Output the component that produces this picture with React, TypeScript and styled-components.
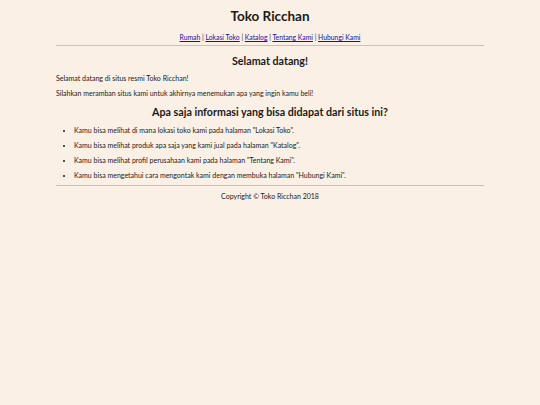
import styled, { createGlobalStyle } from "styled-components"

const GlobalStyle = createGlobalStyle`
  html, body {
    margin: 0;
    padding: 0;
    background-color: #faf0e6;
  }
  body {
    font-family: "Lato", "DejaVu Sans", sans-serif;
    color: #1a1a1a;
  }
`

const Page = styled.div`
  width: 428px;
  margin: 0 auto;
  padding-top: 7px;
`

const Title = styled.h1`
  margin: 0;
  font-size: 13.5px;
  font-weight: bold;
  text-align: center;
  line-height: 18px;
`

const Nav = styled.nav`
  margin-top: 8px;
  font-size: 6.8px;
  line-height: 8px;
  text-align: center;
  color: #333;

  a {
    color: #1a0dab;
    text-decoration: underline;
  }
`

const Rule = styled.hr<{ $top: number }>`
  border: none;
  border-top: 1px solid #c9c0bd;
  margin: ${({ $top }) => $top}px 0 0;
`

const Heading = styled.h2`
  margin: 8px 0 0;
  font-size: 10.7px;
  font-weight: bold;
  line-height: 13px;
  text-align: center;
`

const Para = styled.p`
  margin: 7px 0 0;
  font-size: 7px;
  line-height: 8px;
`

const List = styled.ul`
  margin: 0;
  padding-left: 18px;
`

const Item = styled.li<{ $top: number }>`
  margin-top: ${({ $top }) => $top}px;
  font-size: 7px;
  line-height: 8px;
`

const Footer = styled.footer`
  margin-top: 6px;
  font-size: 7px;
  line-height: 8px;
  text-align: center;
`

const links = ["Rumah", "Lokasi Toko", "Katalog", "Tentang Kami", "Hubungi Kami"]

const items = [
  "Kamu bisa melihat di mana lokasi toko kami pada halaman \"Lokasi Toko\".",
  "Kamu bisa melihat produk apa saja yang kami jual pada halaman \"Katalog\".",
  "Kamu bisa melihat profil perusahaan kami pada halaman \"Tentang Kami\".",
  "Kamu bisa mengetahui cara mengontak kami dengan membuka halaman \"Hubungi Kami\".",
]

export default function App() {
  return (
    <>
      <GlobalStyle />
      <Page>
        <Title>Toko Ricchan</Title>
        <Nav>
          {links.map((l, i) => (
            <span key={l}>
              {i > 0 && " | "}
              <a href="#">{l}</a>
            </span>
          ))}
        </Nav>
        <Rule $top={4} />
        <Heading>Selamat datang!</Heading>
        <Para>Selamat datang di situs resmi Toko Ricchan!</Para>
        <Para>Silahkan meramban situs kami untuk akhirnya menemukan apa yang ingin kamu beli!</Para>
        <Heading>Apa saja informasi yang bisa didapat dari situs ini?</Heading>
        <List>
          {items.map((t, i) => (
            <Item key={t} $top={i === 0 ? 8 : 7}>{t}</Item>
          ))}
        </List>
        <Rule $top={6} />
        <Footer>Copyright © Toko Ricchan 2018</Footer>
      </Page>
    </>
  )
}
